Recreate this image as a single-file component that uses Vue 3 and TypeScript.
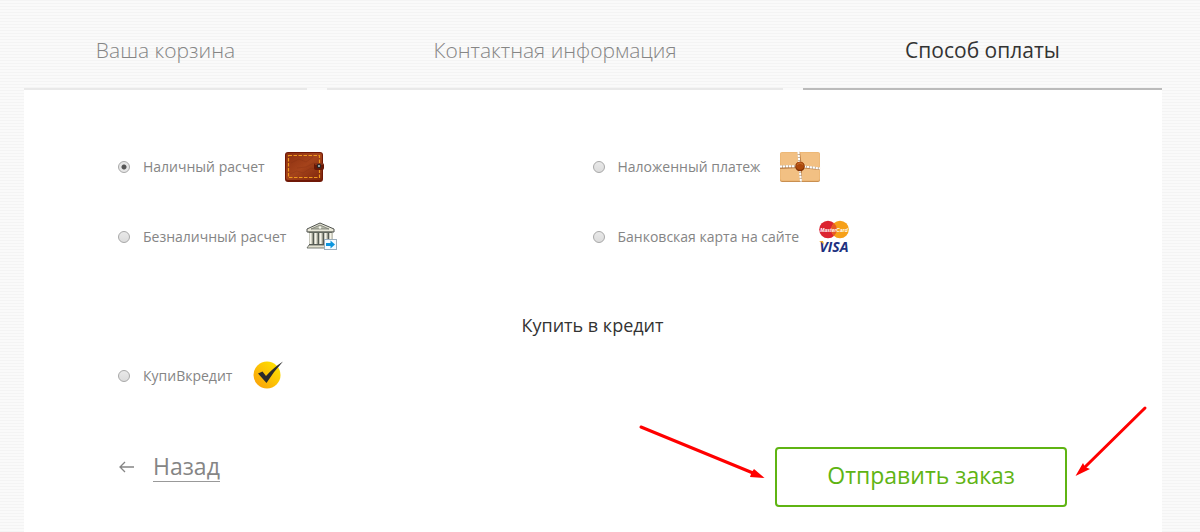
<script setup lang="ts">
import { ref } from 'vue'

interface Step {
  title: string
  width: string
  active: boolean
}

interface Method {
  id: string
  label: string
}

const steps: Step[] = [
  { title: 'Ваша корзина', width: 'narrow', active: false },
  { title: 'Контактная информация', width: 'wide', active: false },
  { title: 'Способ оплаты', width: 'medium', active: true },
]

const methods: Method[] = [
  { id: 'cash', label: 'Наличный расчет' },
  { id: 'cod', label: 'Наложенный платеж' },
  { id: 'bank', label: 'Безналичный расчет' },
  { id: 'card', label: 'Банковская карта на сайте' },
]

const selected = ref('cash')
</script>

<template>
  <main class="page">
    <nav class="steps">
      <a v-for="step in steps" :key="step.title" href="#" class="step" :class="[step.width, { active: step.active }]">{{ step.title }}</a>
    </nav>
    <form class="panel" @submit.prevent>
      <div class="methods">
        <label v-for="m in methods" :key="m.id" class="method" :for="m.id">
          <input :id="m.id" v-model="selected" type="radio" name="payment" :value="m.id" />
          <span>{{ m.label }}</span>
          <svg v-if="m.id === 'cash'" class="icon" width="40" height="32" viewBox="0 0 40 32" aria-hidden="true">
            <defs>
              <linearGradient id="leather" x1="0" y1="0" x2="1" y2="1">
                <stop offset="0" stop-color="#8c2f10" />
                <stop offset=".5" stop-color="#a5431b" />
                <stop offset="1" stop-color="#7d250b" />
              </linearGradient>
            </defs>
            <rect x="0" y="1" width="38" height="30" rx="3" fill="#701806" />
            <rect x="1" y="2" width="36" height="27" rx="2" fill="url(#leather)" />
            <path d="M5 23l7-3 6 2 8-5 7 2M6 12l8-4 7 3 7-5M12 17l9-1 8-4" fill="none" stroke="#7d2a10" stroke-width="1" opacity=".25" />
            <rect x="3.500" y="4.500" width="31" height="22" fill="none" stroke="#f0981c" stroke-width="1.200" stroke-dasharray="3.500 1.500" />
            <rect x="29" y="12" width="10" height="7" rx="2" fill="#661806" />
            <path d="M30 13h8" stroke="#a54c2a" />
            <rect x="32" y="13" width="4" height="4" rx="1" fill="#282828" />
            <circle cx="34" cy="15" r="1" fill="#b8c4cc" />
          </svg>
          <svg v-else-if="m.id === 'cod'" class="icon" width="42" height="32" viewBox="0 0 42 32" aria-hidden="true">
            <rect x="0" y="2" width="40" height="29" rx="2" fill="#c98f50" />
            <rect x="0" y="1" width="40" height="29" rx="2" fill="#edb877" />
            <rect x="1" y="2" width="38" height="27" rx="1" fill="#f2c083" />
            <path d="M0 17l20-1 20 2M19 1l2 15v15" fill="none" stroke="#bc7e45" stroke-width="2" />
            <path d="M0 15.500l20-.5 20 2.500M18.500 1l1 14 1.500 16" fill="none" stroke="#c6b5a0" stroke-width="2" />
            <path d="M0 15.500l20-.5 20 2.500M18.500 1l1 14 1.500 16" fill="none" stroke="#fff" stroke-width="2" stroke-dasharray="2 1" />
            <circle cx="20" cy="15.500" r="4.800" fill="#843000" />
            <circle cx="20" cy="14.800" r="4" fill="#ad490b" />
            <path d="M17 13.500q3-3 6 0" fill="none" stroke="#c77131" />
          </svg>
          <svg v-else-if="m.id === 'bank'" class="icon" width="32" height="30" viewBox="0 0 32 30" aria-hidden="true">
            <path d="M1 7L14 1l14 6v3H1z" fill="#e9e8d9" stroke="#50534f" stroke-width="1" />
            <path d="M5 7l9-4 9 4z" fill="#b6b8a9" stroke="#6b6f66" stroke-width=".7" />
            <circle cx="14" cy="5.500" r="1.300" fill="#f6f6ec" />
            <path d="M3 10h23v13H3z" fill="#555a53" />
            <path d="M5 11v11M10 11v11M15 11v11M20 11v11M25 11v7" stroke="#b2b3a2" stroke-width="3.500" />
            <path d="M4.500 11v11M9.500 11v11M14.500 11v11M19.500 11v11M24.500 11v7" stroke="#f5f4e9" stroke-width="2" />
            <path d="M3 23h23l1 3H1z" fill="#e1e0d0" stroke="#5b5f58" stroke-width=".8" />
            <path d="M2 10h25" stroke="#73776b" />
            <rect x="18.500" y="17.500" width="12" height="10" fill="#f4fbff" stroke="#9badbb" />
            <path d="M20 21h4.500v-2.500l4.500 4-4.500 4V24H20z" fill="#0b96df" />
          </svg>
          <svg v-else class="icon" width="32" height="34" viewBox="0 0 32 34" aria-hidden="true">
            <circle cx="9" cy="9.500" r="8.800" fill="#dc2330" />
            <circle cx="21" cy="9.500" r="8.800" fill="#f6a018" />
            <path d="M15 3.100a8.800 8.800 0 0 1 0 12.800a8.800 8.800 0 0 1 0-12.800" fill="#e75a24" />
            <text x="15" y="11.500" class="mastercard">MasterCard</text>
            <text x="15" y="32" class="visa">VISA</text>
            <path d="M0 21h4l1 4q-2-3-5-4z" fill="#eda529" />
          </svg>
        </label>
      </div>
      <h2 class="credit-title">Купить в кредит</h2>
      <label class="method credit" for="credit">
        <input id="credit" v-model="selected" type="radio" name="payment" value="credit" />
        <span>КупиВкредит</span>
        <svg class="icon" width="32" height="30" viewBox="0 0 32 30" aria-hidden="true">
          <defs>
            <linearGradient id="gold" x1="0" y1="1" x2="1" y2="0">
              <stop offset="0" stop-color="#f99b0b" />
              <stop offset="1" stop-color="#ffe900" />
            </linearGradient>
          </defs>
          <circle cx="15" cy="14" r="13.500" fill="url(#gold)" />
          <path d="M6 12.500l4.500-2 3.500 4.500Q21 7 31 .5Q22 10 14.500 22z" fill="#2b2b2b" />
        </svg>
      </label>
      <div class="actions">
        <a href="#" class="back">
          <svg width="16" height="12" viewBox="0 0 16 12" aria-hidden="true">
            <path d="M16 6H2M7 1L2 6l5 5" fill="none" stroke="#858585" stroke-width="1.300" />
          </svg>
          <span>Назад</span>
        </a>
        <div class="submit-wrap">
          <button type="submit" class="submit">Отправить заказ</button>
          <svg class="arrow arrow-left" width="128" height="56" viewBox="0 0 128 56" aria-hidden="true">
            <path d="M4 2L116 48" stroke="#f00" stroke-width="3" stroke-linecap="round" />
            <path d="M127.500 53L113 52l1.500-4.500L117 44z" fill="#f00" />
          </svg>
          <svg class="arrow arrow-right" width="74" height="74" viewBox="0 0 74 74" aria-hidden="true">
            <path d="M71 3L11 62" stroke="#f00" stroke-width="3" stroke-linecap="round" />
            <path d="M1.500 71L9 58l2 4 5 2z" fill="#f00" />
          </svg>
        </div>
      </div>
    </form>
  </main>
</template>

<style>
body {
  margin: 0;
  background: repeating-linear-gradient(#f4f4f4 0 1px, #fafafa 1px 3px);
}
</style>

<style scoped>
.page {
  box-sizing: border-box;
  min-height: 100vh;
  padding: 0 38px 0 24px;
  display: flex;
  flex-direction: column;
  font-family: "Open Sans", "Noto Sans", sans-serif;
  color: #858585;
}
.steps {
  display: flex;
  gap: 20px;
  height: 90px;
}
.step {
  box-sizing: border-box;
  padding-top: 35px;
  border-bottom: 2px solid #e9e9e9;
  text-align: center;
  font-size: 21px;
  line-height: 30px;
  font-weight: 300;
  color: #858585;
  text-decoration: none;
  white-space: nowrap;
}
.narrow { flex: 283 1 0; }
.wide { flex: 456 1 0; }
.medium { flex: 359 1 0; }
.step.active {
  border-color: #bbb;
  font-weight: 400;
  color: #333;
}
.panel {
  flex: 1;
  padding: 61px 95px 24px 94px;
  background: #fff;
}
.methods {
  display: grid;
  grid-template-columns: 1fr 1fr;
  row-gap: 37px;
}
.method {
  display: flex;
  align-items: center;
  font-size: 14px;
  line-height: 20px;
}
.method input {
  appearance: none;
  box-sizing: border-box;
  flex: none;
  width: 12px;
  height: 12px;
  margin: 0 13px 0 0;
  border: 1px solid #a8a8a8;
  border-radius: 50%;
  background: linear-gradient(#e9e9e9, #dcdcdc);
}
.method input:checked {
  background: radial-gradient(circle, #555 0 2px, #e6e6e6 3px);
}
.icon {
  flex: none;
  margin-left: 20px;
  overflow: visible;
}
.credit-title {
  margin: 59px 0 24px;
  text-align: center;
  font-size: 18px;
  line-height: 24px;
  font-weight: 400;
  color: #333;
}
.actions {
  display: flex;
  justify-content: space-between;
  align-items: flex-start;
  margin-top: 56px;
}
.back {
  display: flex;
  align-items: center;
  gap: 19px;
  margin-top: 4px;
  font-size: 23px;
  line-height: 30px;
  color: #858585;
  text-decoration: none;
}
.back span {
  border-bottom: 1px solid #999;
}
.submit-wrap {
  position: relative;
}
.submit {
  display: block;
  padding: 11px 50px 15px;
  border: 2px solid #5fb413;
  border-radius: 4px;
  background: #fff;
  font-family: inherit;
  font-size: 23px;
  line-height: 30px;
  color: #5fb413;
}
.arrow {
  position: absolute;
}
.arrow-left {
  right: 100%;
  top: -22px;
  margin-right: 10px;
}
.arrow-right {
  left: 100%;
  top: -42px;
  margin-left: 7px;
}
.mastercard {
  font: italic bold 5px "Liberation Sans", sans-serif;
  fill: #fff;
  text-anchor: middle;
}
.visa {
  font: italic bold 14px "Open Sans", sans-serif;
  fill: #20307f;
  text-anchor: middle;
}
</style>
